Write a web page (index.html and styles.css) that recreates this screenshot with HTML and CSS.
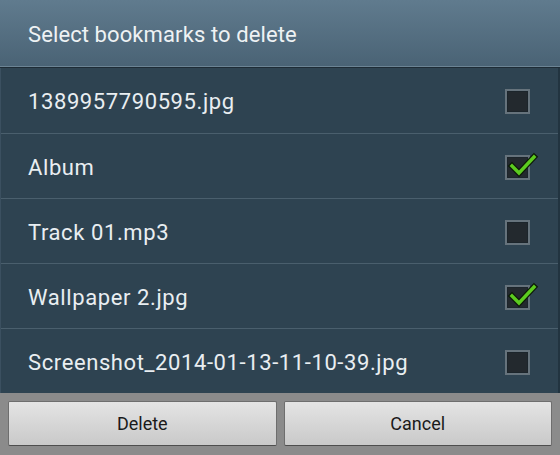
FILE: index.html
```html
<!DOCTYPE html>
<html>
<head>
<meta charset="utf-8">
<link rel="stylesheet" href="styles.css">
</head>
<body>
<div class="dialog">
  <div class="header">Select bookmarks to delete</div>
  <div class="list">
    <div class="row"><span class="label">1389957790595.jpg</span><span class="box"></span></div>
    <div class="row"><span class="label">Album</span><span class="box checked"><svg class="tick" viewBox="0 0 32 32" width="32" height="32"><path d="M5 16 L12 23 L27 7" fill="none" stroke="#0d1a08" stroke-width="6" stroke-linecap="square"/><path d="M5 16 L12 23 L27 7" fill="none" stroke="#5ccb1f" stroke-width="3.4" stroke-linecap="square"/></svg></span></div>
    <div class="row"><span class="label">Track 01.mp3</span><span class="box"></span></div>
    <div class="row"><span class="label">Wallpaper 2.jpg</span><span class="box checked"><svg class="tick" viewBox="0 0 32 32" width="32" height="32"><path d="M5 16 L12 23 L27 7" fill="none" stroke="#0d1a08" stroke-width="6" stroke-linecap="square"/><path d="M5 16 L12 23 L27 7" fill="none" stroke="#5ccb1f" stroke-width="3.4" stroke-linecap="square"/></svg></span></div>
    <div class="row"><span class="label">Screenshot_2014-01-13-11-10-39.jpg</span><span class="box"></span></div>
  </div>
  <div class="footer">
    <div class="btn">Delete</div>
    <div class="btn">Cancel</div>
  </div>
</div>
</body>
</html>
```
FILE: styles.css
```css
html, body {
  margin: 0;
  padding: 0;
  width: 560px;
  height: 455px;
  overflow: hidden;
  background: #2e4351;
}
.dialog {
  width: 560px;
  height: 455px;
  display: flex;
  flex-direction: column;
  font-family: Roboto, "Noto Sans", sans-serif;
}
.header {
  height: 67px;
  box-sizing: border-box;
  padding-left: 28px;
  padding-top: 2px;
  display: flex;
  align-items: center;
  color: #eef2f4;
  font-size: 22px;
  letter-spacing: 0.1px;
  background: linear-gradient(#607b8e, #4a6375);
  border-bottom: 1px solid #6c8494;
  box-shadow: 0 1px 0 #1e2c36;
  position: relative;
  z-index: 1;
}
.list {
  flex: 1;
  display: flex;
  flex-direction: column;
  background: #2e4351;
  border-left: 1px solid #3b5060;
  border-right: 2px solid #223440;
  margin-top: 1px;
}
.row {
  height: 65px;
  box-sizing: border-box;
  display: flex;
  align-items: center;
  justify-content: space-between;
  padding-left: 27px;
  padding-right: 28px;
  padding-top: 2px;
  color: #e9eef1;
  font-size: 22px;
  letter-spacing: 0.6px;
}
.row + .row {
  border-top: 1px solid #4a5f6d;
}
.box {
  width: 25px;
  height: 25px;
  box-sizing: border-box;
  border: 2px solid #66737c;
  outline: 1px solid #1c252b;
  outline-offset: -3px;
  background: #23292e;
  position: relative;
}
.tick {
  position: absolute;
  left: 0;
  top: -7px;
}
.footer {
  height: 62px;
  box-sizing: border-box;
  background: #8b8b8b;
  display: flex;
  gap: 7px;
  padding: 8px 8px 9px 8px;
}
.btn {
  flex: 1;
  display: flex;
  align-items: center;
  justify-content: center;
  background: linear-gradient(#e4e4e4, #c9c9c9);
  border: 1px solid #6e6e6e;
  border-bottom-color: #4e4e4e;
  border-radius: 2px;
  color: #1a1a1a;
  font-size: 18px;
}
```
